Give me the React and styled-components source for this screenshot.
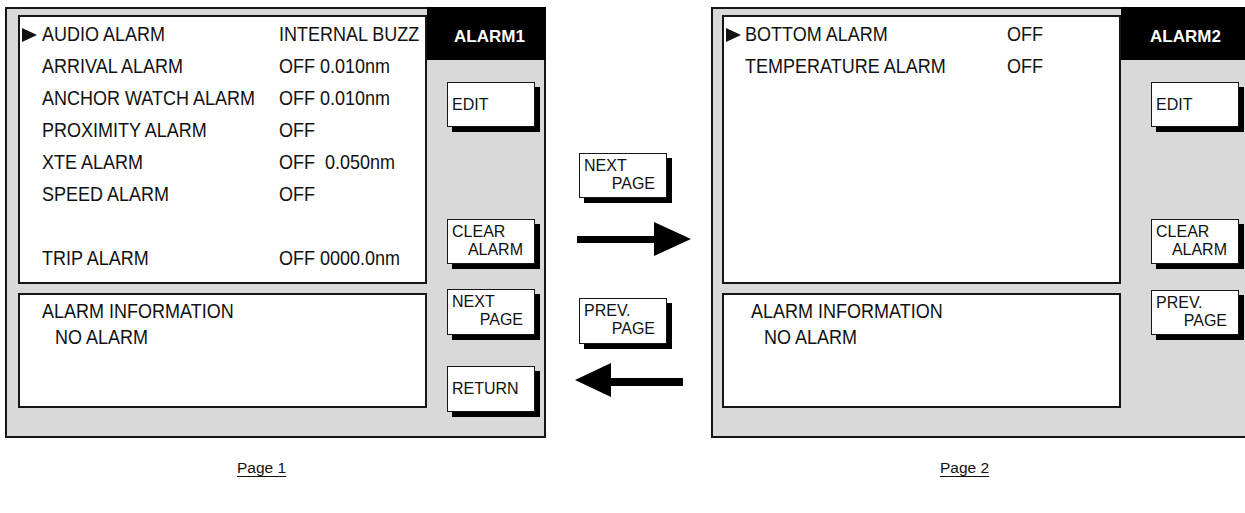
import React from "react";
import styled, { createGlobalStyle } from "styled-components";

const GlobalStyle = createGlobalStyle`
	html, body {
		margin: 0;
		padding: 0;
		background: #ffffff;
	}
	body {
		width: 1245px;
		height: 513px;
		overflow: hidden;
		font-family: "Liberation Sans", Arial, sans-serif;
		color: #111;
	}
`;

const Page = styled.div`
	width: 1245px;
	height: 513px;
	overflow: hidden;
	padding: 7px 0 0 5px;
	box-sizing: border-box;
`;

const Screens = styled.div`
	display: flex;
	align-items: flex-start;
	width: 1400px;
`;

const Panel = styled.div`
	display: flex;
	width: 541px;
	height: 431px;
	flex-shrink: 0;
	box-sizing: border-box;
	border: 2px solid #161616;
	background: #d9d9d9;
`;

const MainCol = styled.div`
	display: flex;
	flex-direction: column;
	gap: 9px;
	padding: 6px 0 0 ${(p) => p.$inset}px;
`;

const ListBox = styled.div`
	width: ${(p) => p.$w}px;
	height: 269px;
	box-sizing: border-box;
	border: 2px solid #161616;
	background: #fff;
	padding-top: 2px;
`;

const Row = styled.div`
	display: grid;
	grid-template-columns: ${(p) => p.$marker}px ${(p) => p.$label}px auto;
	align-items: center;
	height: 32px;
	font-size: 18px;
	white-space: pre;
`;

// the manual's typeface is tall and narrow, so stretch the glyphs a little
const Cell = styled.span`
	display: inline-block;
	transform: scaleY(1.1);
	transform-origin: 50% 55%;
`;

const Marker = styled.span`
	justify-self: start;
	margin-left: 2px;
	width: 0;
	height: 0;
	border-left: 15px solid #111;
	border-top: 7px solid transparent;
	border-bottom: 7px solid transparent;
	visibility: ${(p) => (p.$on ? "visible" : "hidden")};
`;

const InfoBox = styled.div`
	width: ${(p) => p.$w}px;
	height: 115px;
	box-sizing: border-box;
	border: 2px solid #161616;
	background: #fff;
	padding: 4px 0 0 ${(p) => p.$pad}px;
	font-size: 18px;
	line-height: 26px;
`;

const InfoLine = styled.div`
	padding-left: ${(p) => p.$indent || 0}px;
	transform: scaleY(1.1);
	transform-origin: 0 55%;
`;

const SideCol = styled.div`
	display: flex;
	flex-direction: column;
	flex: 1;
`;

const Tab = styled.div`
	margin: -2px -2px 0 0;
	padding: 6px 0 0 ${(p) => p.$pad}px;
	height: 47px;
	background: #000;
	color: #fff;
	font-weight: bold;
	font-size: 17px;
	display: flex;
	align-items: center;
`;

const SoftKey = styled.div`
	width: ${(p) => p.$w || 88}px;
	height: ${(p) => p.$h || 45}px;
	margin: ${(p) => p.$top}px 0 0 ${(p) => p.$left || 0}px;
	box-sizing: border-box;
	border: 1.5px solid #161616;
	background: #fff;
	box-shadow: 5px 5px 0 #000;
	font-size: 16px;
	line-height: 18px;
	padding: ${(p) => (p.$single ? "0" : "3px")} 11px 0 4px;
	display: flex;
	flex-direction: column;
	justify-content: ${(p) => (p.$single ? "center" : "flex-start")};
`;

const KeyLine = styled.span`
	text-align: ${(p) => (p.$right ? "right" : "left")};
`;

const Middle = styled.div`
	display: flex;
	flex-direction: column;
	align-items: flex-start;
	width: 165px;
	flex-shrink: 0;
	padding: 146px 0 0 33px;
	box-sizing: border-box;
`;

const ArrowSvg = styled.svg`
	display: block;
	margin: ${(p) => p.$top}px 0 0 ${(p) => p.$left}px;
`;

const Captions = styled.div`
	display: flex;
	margin-top: 21px;
`;

const Caption = styled.div`
	width: ${(p) => p.$w}px;
	padding-left: ${(p) => p.$pad}px;
	box-sizing: border-box;
	font-size: 15.5px;
	line-height: 18px;

	span {
		text-decoration: underline;
		text-underline-offset: 3px;
		text-decoration-thickness: 1px;
	}
`;

const Key = ({ lines, top, left, h }) => (
	<SoftKey $top={top} $left={left} $h={h} $single={lines.length === 1}>
		{lines.map((t, i) => (
			<KeyLine key={i} $right={i > 0}>
				{t}
			</KeyLine>
		))}
	</SoftKey>
);

const page1Rows = [
	["AUDIO ALARM", "INTERNAL BUZZ"],
	["ARRIVAL ALARM", "OFF 0.010nm"],
	["ANCHOR WATCH ALARM", "OFF 0.010nm"],
	["PROXIMITY ALARM", "OFF"],
	["XTE ALARM", "OFF  0.050nm"],
	["SPEED ALARM", "OFF"],
	["", ""],
	["TRIP ALARM", "OFF 0000.0nm"],
];

const page2Rows = [
	["BOTTOM ALARM", "OFF"],
	["TEMPERATURE ALARM", "OFF"],
];

const RightArrow = () => (
	<ArrowSvg width="116" height="36" viewBox="0 0 116 36" $top={23} $left={-3}>
		<rect x="1" y="15" width="80" height="7" fill="#000" />
		<polygon points="78,1 115,18 78,35" fill="#000" />
	</ArrowSvg>
);

const LeftArrow = () => (
	<ArrowSvg width="110" height="36" viewBox="0 0 110 36" $top={18} $left={-4}>
		<polygon points="0,18 36,1 36,35" fill="#000" />
		<rect x="34" y="16" width="74" height="8" fill="#000" />
	</ArrowSvg>
);

const AlarmList = ({ rows, marker, label, width }) => (
	<ListBox $w={width}>
		{rows.map(([name, value], i) => (
			<Row key={i} $marker={marker} $label={label}>
				<Marker $on={i === 0} />
				<Cell>{name}</Cell>
				<Cell>{value}</Cell>
			</Row>
		))}
	</ListBox>
);

export default function App() {
	return (
		<Page>
			<GlobalStyle />
			<Screens>
				<Panel>
					<MainCol $inset={11}>
						<AlarmList rows={page1Rows} marker={22} label={237} width={409} />
						<InfoBox $w={409} $pad={22}>
							<InfoLine>ALARM INFORMATION</InfoLine>
							<InfoLine $indent={13}>NO ALARM</InfoLine>
						</InfoBox>
					</MainCol>
					<SideCol>
						<Tab $pad={27}>ALARM1</Tab>
						<Key lines={["EDIT"]} top={22} left={20} />
						<Key lines={["CLEAR", "ALARM"]} top={92} left={20} />
						<Key lines={["NEXT", "PAGE"]} top={25} left={20} h={46} />
						<Key lines={["RETURN"]} top={31} left={20} h={46} />
					</SideCol>
				</Panel>

				<Middle>
					<Key lines={["NEXT", "PAGE"]} top={0} h={45} />
					<RightArrow />
					<Key lines={["PREV.", "PAGE"]} top={41} h={46} />
					<LeftArrow />
				</Middle>

				<Panel>
					<MainCol $inset={9}>
						<AlarmList rows={page2Rows} marker={21} label={262} width={399} />
						<InfoBox $w={399} $pad={27}>
							<InfoLine>ALARM INFORMATION</InfoLine>
							<InfoLine $indent={13}>NO ALARM</InfoLine>
						</InfoBox>
					</MainCol>
					<SideCol>
						<Tab $pad={29}>ALARM2</Tab>
						<Key lines={["EDIT"]} top={22} left={30} />
						<Key lines={["CLEAR", "ALARM"]} top={92} left={30} />
						<Key lines={["PREV.", "PAGE"]} top={26} left={30} />
					</SideCol>
				</Panel>
			</Screens>
			<Captions>
				<Caption $w={706} $pad={232}>
					<span>Page 1</span>
				</Caption>
				<Caption $w={500} $pad={229}>
					<span>Page 2</span>
				</Caption>
			</Captions>
		</Page>
	);
}
